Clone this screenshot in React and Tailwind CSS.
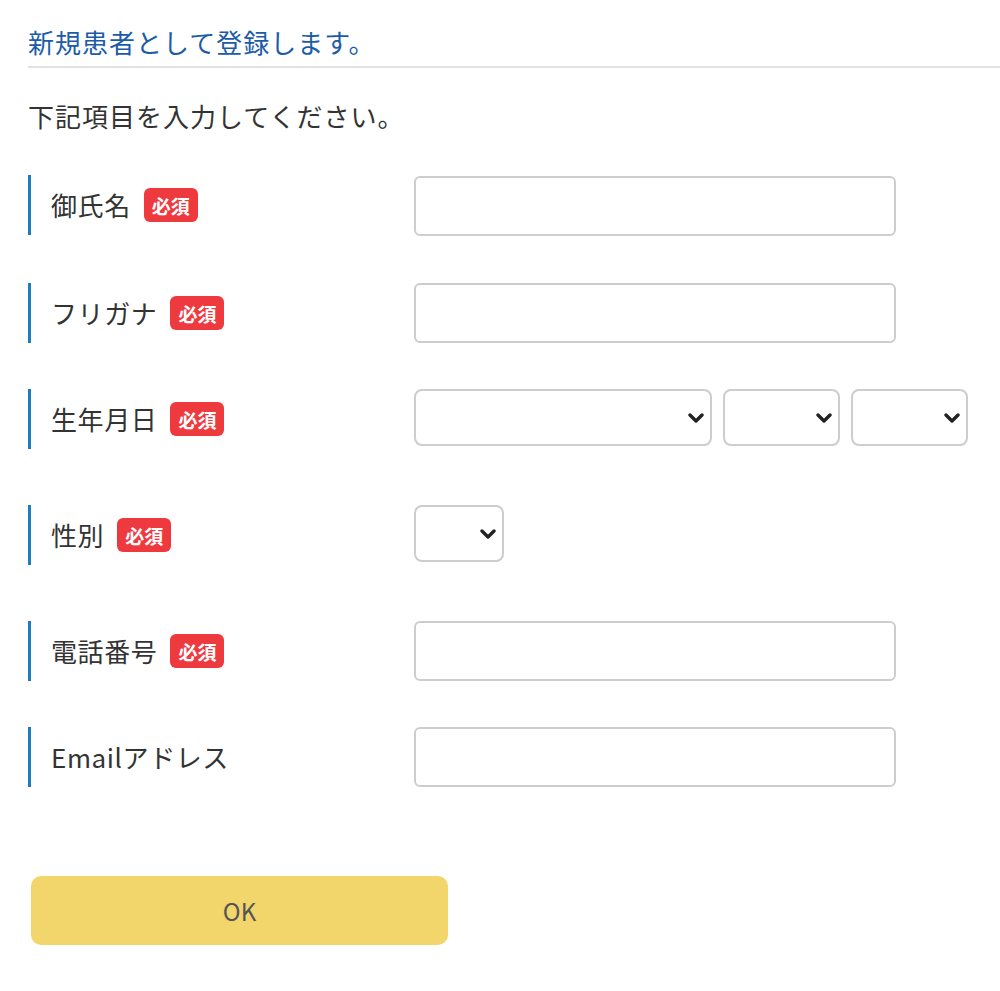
import React from "react";

const FONT = { fontFamily: '"Noto Sans CJK JP", "Noto Sans", sans-serif' };

function Badge() {
  return (
    <span className="ml-[13px] inline-flex h-[34px] w-[54px] items-center justify-center rounded-[6px] bg-[#ee3a3f] text-[19px] font-bold leading-none text-white">
      必須
    </span>
  );
}

function Label({ children, required }) {
  return (
    <div className="flex h-[60px] w-[386px] shrink-0 items-center border-l-[3px] border-[#1f7dbd] pl-[20px]">
      <span className="text-[26px] leading-none tracking-[0.6px] text-[#333]">{children}</span>
      {required && <Badge />}
    </div>
  );
}

function TextInput() {
  return (
    <input
      type="text"
      className="h-[60px] w-[482px] rounded-[6px] border-2 border-[#cdcdcd] bg-white px-3 text-[22px] outline-none"
    />
  );
}

function Chevron() {
  return (
    <svg
      className="pointer-events-none absolute right-[8px] top-1/2 -translate-y-1/2"
      width="16"
      height="11"
      viewBox="0 0 16 11"
    >
      <path d="M2 2.5 L8 8.5 L14 2.5" fill="none" stroke="#222" strokeWidth="3.4" strokeLinecap="round" strokeLinejoin="round" />
    </svg>
  );
}

function Select({ width }) {
  return (
    <div className="relative" style={{ width }}>
      <select className="h-[57px] w-full appearance-none rounded-[8px] border-2 border-[#cdcdcd] bg-white px-3 text-[22px] outline-none">
        <option></option>
      </select>
      <Chevron />
    </div>
  );
}

export default function App() {
  return (
    <div className="min-h-[991px] w-[1000px] bg-white pl-[28px]" style={FONT}>
      <div className="pt-[26px]">
        <h1 className="border-b-2 border-[#e2e2e2] pb-[8px] text-[26px] font-normal leading-[32px] tracking-[1px] text-[#1c5ca7]">
          新規患者として登録します。
        </h1>
      </div>
      <p className="mt-[32px] text-[26px] leading-[32px] tracking-[1px] text-[#333]">下記項目を入力してください。</p>

      <div className="mt-[43px] flex flex-col">
        <div className="mb-[47px] flex items-start">
          <Label required>御氏名</Label>
          <div className="pt-[1px]"><TextInput /></div>
        </div>
        <div className="mb-[46px] flex items-start">
          <Label required>フリガナ</Label>
          <TextInput />
        </div>
        <div className="mb-[56px] flex items-start">
          <Label required>生年月日</Label>
          <div className="flex gap-[11px]">
            <Select width={298} />
            <Select width={117} />
            <Select width={117} />
          </div>
        </div>
        <div className="mb-[56px] flex items-start">
          <Label required>性別</Label>
          <Select width={90} />
        </div>
        <div className="mb-[46px] flex items-start">
          <Label required>電話番号</Label>
          <TextInput />
        </div>
        <div className="flex items-start">
          <Label>Emailアドレス</Label>
          <TextInput />
        </div>
      </div>

      <button
        type="button"
        className="ml-[3px] mt-[89px] flex h-[69px] w-[417px] items-center justify-center rounded-[10px] bg-[#f2d56b] text-[24px] text-[#555]"
      >
        OK
      </button>
    </div>
  );
}
